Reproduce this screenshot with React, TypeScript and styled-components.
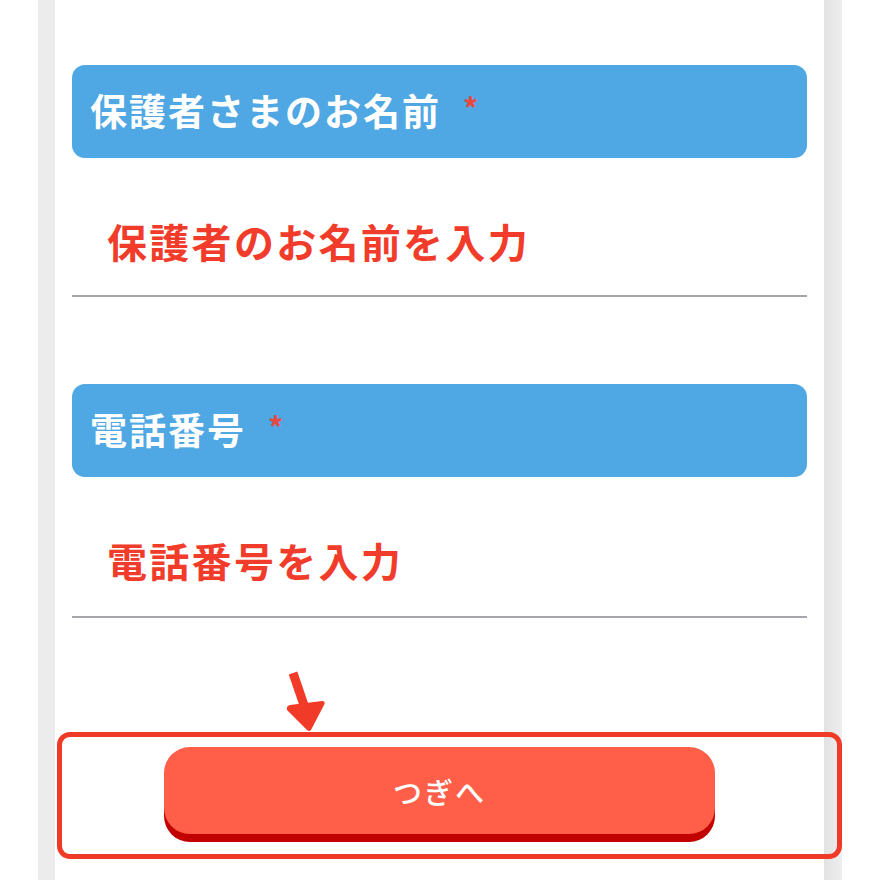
import React from 'react';
import styled, { createGlobalStyle } from 'styled-components';

const GlobalStyle = createGlobalStyle`
    html, body {
        margin: 0;
        padding: 0;
        background: #ffffff;
        overflow: hidden;
    }
    body {
        font-family: "Noto Sans CJK JP", "Noto Sans", sans-serif;
    }
`;

const Page = styled.div`
    position: relative;
    width: 880px;
    height: 880px;
    background: #ffffff;
`;

const Shell = styled.div`
    margin-left: 38px;
    width: 804px;
    height: 880px;
    box-sizing: border-box;
    padding: 0 18px 0 17px;
    background: linear-gradient(90deg, #ececec 0, #ececec 17px, #ffffff 17px, #ffffff 786px, #e2e2e2 786px, #eeeeee 804px);
`;

const Card = styled.div`
    height: 100%;
    background: #ffffff;
    padding: 65px 17px 0;
    box-sizing: border-box;
    display: flex;
    flex-direction: column;
`;

const Field = styled.div<{ $gap?: number }>`
    display: flex;
    flex-direction: column;
    margin-top: ${p => p.$gap ?? 0}px;
`;

const FieldHeader = styled.div`
    height: 93px;
    border-radius: 13px;
    background: #4fa7e3;
    display: flex;
    align-items: center;
    padding: 0 0 4px 18px;
    box-sizing: border-box;
    color: #ffffff;
    font-size: 37px;
    font-weight: 700;
    letter-spacing: 2px;
`;

const Required = styled.span`
    color: #e84840;
    font-size: 30px;
    margin-left: 22px;
    position: relative;
    top: -3px;
`;

const InputRow = styled.div<{ $tall?: number }>`
    height: ${p => 139 + (p.$tall ?? 0)}px;
    box-sizing: border-box;
    border-bottom: 2px solid #a4a6a9;
    padding: 58px 0 0 35px;
`;

const Placeholder = styled.div`
    color: #f23c2b;
    font-size: 40px;
    font-weight: 700;
    line-height: 50px;
    letter-spacing: 2.3px;
`;

const ButtonArea = styled.div`
    display: flex;
    justify-content: center;
    margin-top: 129px;
`;

const NextButton = styled.button`
    width: 551px;
    height: 87px;
    border: none;
    border-radius: 26px;
    background: #ff5e49;
    box-shadow: 0 8px 0 #c20000;
    color: #ffffff;
    font-family: "Noto Sans CJK JP", "Noto Sans", sans-serif;
    font-size: 29px;
    font-weight: 500;
    letter-spacing: 2px;
    cursor: pointer;
`;

const Annotation = styled.div`
    position: absolute;
    left: 57px;
    top: 732px;
    width: 785px;
    height: 127px;
    box-sizing: border-box;
    border: 5px solid #f03a28;
    border-radius: 13px;
    pointer-events: none;
`;

const Arrow = styled.svg`
    position: absolute;
    left: 280px;
    top: 668px;
    width: 50px;
    height: 66px;
`;

type FieldProps = { label: string; placeholder: string; gap?: number; tall?: number };

const FormField = ({ label, placeholder, gap, tall }: FieldProps) => (
    <Field $gap={gap}>
        <FieldHeader>
            {label}
            <Required>*</Required>
        </FieldHeader>
        <InputRow $tall={tall}>
            <Placeholder>{placeholder}</Placeholder>
        </InputRow>
    </Field>
);

export default function App() {
    return (
        <Page>
            <GlobalStyle />
            <Shell>
                <Card>
                    <FormField label="保護者さまのお名前" placeholder="保護者のお名前を入力" />
                    <FormField label="電話番号" placeholder="電話番号を入力" gap={87} tall={2} />
                    <ButtonArea>
                        <NextButton>つぎへ</NextButton>
                    </ButtonArea>
                </Card>
            </Shell>
            <Annotation />
            <Arrow viewBox="0 0 50 66">
                <path d="M13 5 L25 40" stroke="#f23a28" strokeWidth="9" strokeLinecap="butt" />
                <path d="M7 42 Q6 38 10 37 L42 33 Q46 33 44 37 L31 62 Q29 64 27 62 Z" fill="#f23a28" />
            </Arrow>
        </Page>
    );
}
